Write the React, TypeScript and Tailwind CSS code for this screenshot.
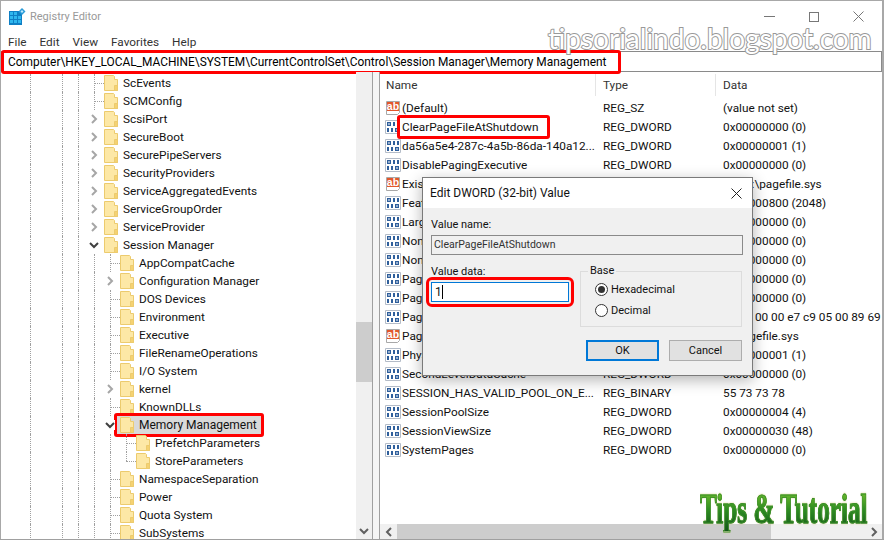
import React from 'react';

const FONT = "font-['Roboto','Noto_Sans',sans-serif]";

type TreeItem = {
  name: string;
  level?: number;
  arrow?: 'closed' | 'open';
  last?: boolean;
  selected?: boolean;
};

const treeItems: TreeItem[] = [
  { name: 'ScEvents' },
  { name: 'SCMConfig' },
  { name: 'ScsiPort', arrow: 'closed' },
  { name: 'SecureBoot', arrow: 'closed' },
  { name: 'SecurePipeServers', arrow: 'closed' },
  { name: 'SecurityProviders', arrow: 'closed' },
  { name: 'ServiceAggregatedEvents', arrow: 'closed' },
  { name: 'ServiceGroupOrder', arrow: 'closed' },
  { name: 'ServiceProvider', arrow: 'closed' },
  { name: 'Session Manager', arrow: 'open' },
  { name: 'AppCompatCache', level: 1 },
  { name: 'Configuration Manager', level: 1, arrow: 'closed' },
  { name: 'DOS Devices', level: 1 },
  { name: 'Environment', level: 1 },
  { name: 'Executive', level: 1 },
  { name: 'FileRenameOperations', level: 1 },
  { name: 'I/O System', level: 1 },
  { name: 'kernel', level: 1, arrow: 'closed' },
  { name: 'KnownDLLs', level: 1 },
  { name: 'Memory Management', level: 1, arrow: 'open', selected: true },
  { name: 'PrefetchParameters', level: 2 },
  { name: 'StoreParameters', level: 2, last: true },
  { name: 'NamespaceSeparation', level: 1 },
  { name: 'Power', level: 1 },
  { name: 'Quota System', level: 1 },
  { name: 'SubSystems', level: 1 },
];

const values: { name: string; type: string; data: string; text?: boolean; mark?: boolean }[] = [
  { name: '(Default)', type: 'REG_SZ', data: '(value not set)', text: true },
  { name: 'ClearPageFileAtShutdown', type: 'REG_DWORD', data: '0x00000000 (0)', mark: true },
  { name: 'da56a5e4-287c-4a5b-86da-140a12...', type: 'REG_DWORD', data: '0x00000001 (1)' },
  { name: 'DisablePagingExecutive', type: 'REG_DWORD', data: '0x00000000 (0)' },
  { name: 'ExistingPageFiles', type: 'REG_MULTI_SZ', data: '\\??\\C:\\pagefile.sys', text: true },
  { name: 'FeatureSettings', type: 'REG_DWORD', data: '0x00000800 (2048)' },
  { name: 'LargeSystemCache', type: 'REG_DWORD', data: '0x00000000 (0)' },
  { name: 'NonPagedPoolQuota', type: 'REG_DWORD', data: '0x00000000 (0)' },
  { name: 'NonPagedPoolSize', type: 'REG_DWORD', data: '0x00000000 (0)' },
  { name: 'PagedPoolQuota', type: 'REG_DWORD', data: '0x00000000 (0)' },
  { name: 'PagedPoolSize', type: 'REG_DWORD', data: '0x00000000 (0)' },
  { name: 'PagefileUsage', type: 'REG_BINARY', data: '2c 00 00 00 e7 c9 05 00 89 69 02 00' },
  { name: 'PagingFiles', type: 'REG_MULTI_SZ', data: '?:\\pagefile.sys', text: true },
  { name: 'PhysicalAddressExtension', type: 'REG_DWORD', data: '0x00000001 (1)' },
  { name: 'SecondLevelDataCache', type: 'REG_DWORD', data: '0x00000000 (0)' },
  { name: 'SESSION_HAS_VALID_POOL_ON_E...', type: 'REG_BINARY', data: '55 73 73 78' },
  { name: 'SessionPoolSize', type: 'REG_DWORD', data: '0x00000004 (4)' },
  { name: 'SessionViewSize', type: 'REG_DWORD', data: '0x00000030 (48)' },
  { name: 'SystemPages', type: 'REG_DWORD', data: '0x00000000 (0)' },
];

const FolderIcon = () => (
  <svg width="14" height="16" viewBox="0 0 14 16" className="shrink-0">
    <path d="M.5.5h9l1 1v3h3v11H.5z" fill="#fde8a6" stroke="#eccb6e" />
    <path d="M10.5 10.5h3v5h-3z" fill="#f5d272" stroke="#eccb6e" />
  </svg>
);

const AppIcon = () => (
  <svg width="17" height="17" viewBox="0 0 17 17">
    <path d="M0 3h13v14H0z" fill="#0f7fc4" />
    <path d="M1 4h3v3H1zM5 4h3v3H5zM1 8h3v3H1zM5 8h3v3H5zM9 8h3v3H9zM1 12h3v3H1zM5 12h3v3H5zM9 12h3v3H9z" fill="#2fb7ee" />
    <path d="M13 0l3.5 3.5L13 7 9.5 3.5z" fill="#2a9bd8" />
    <path d="M13 2l1.5 1.5L13 5l-1.5-1.5z" fill="#bfe8fb" />
  </svg>
);

const StringIcon = () => (
  <svg width="16" height="16" viewBox="0 0 16 16" className="shrink-0">
    <path d="M1.5 1.5h13v11l-2 2h-11z" fill="#fff" stroke="#a8a8a8" />
    <path d="M2 2h12v9H2z" fill="#e2572b" />
    <text x="8" y="9.5" textAnchor="middle" fontSize="10.5" fontWeight="700" fill="#fff" fontFamily="Liberation Sans, sans-serif">
      ab
    </text>
  </svg>
);

// "011" over "110" in blue on a small sheet
const BinaryIcon = () => (
  <svg width="16" height="16" viewBox="0 0 16 16" className="shrink-0">
    <path d="M.5 1.5h15v13H.5z" fill="#fff" stroke="#b4bcc8" />
    <path
      fillRule="evenodd"
      d="M2 3h4v4H2zM3.5 4v2h1V4zM8 3h2v4H8zM12 3h2v4h-2zM2 9h2v4H2zM6 9h2v4H6zM10 9h4v4h-4zM11.5 10v2h1v-2z"
      fill="#2f5f9c"
    />
  </svg>
);

const Chevron = ({ dir, className }: { dir: 'left' | 'right' | 'down'; className?: string }) => {
  const d = dir === 'left' ? 'M7 1L3 5l4 4' : dir === 'right' ? 'M3 1l4 4-4 4' : 'M1 3l4 4 4-4';
  return (
    <svg width="10" height="10" viewBox="0 0 10 10" className={className}>
      <path d={d} fill="none" stroke="currentColor" strokeWidth="2" />
    </svg>
  );
};

const TreeRow = ({ item }: { item: TreeItem }) => {
  const level = item.level ?? 0;
  const guide = 'h-full shrink-0 border-l border-dotted border-[#a0a0a0]';
  return (
    <div className="flex h-[18px] items-center">
      <div className="w-[29px] shrink-0" />
      <div className={`w-[32px] ${guide}`} />
      <div className={`w-[16px] ${guide}`} />
      <div className={`w-[16px] ${guide}`} />
      {level > 0 && <div className={`w-[16px] ${guide}`} />}
      {level > 1 && <div className={`w-[16px] ${guide}`} />}
      {/* connector cell in front of the folder */}
      <div className="relative flex h-full w-[10px] shrink-0 items-center">
        {!item.arrow && (
          <>
            <div className={`absolute top-0 left-0 border-l border-dotted border-[#a0a0a0] ${item.last ? 'h-[9px]' : 'h-full'}`} />
            <div className="w-full border-t border-dotted border-[#a0a0a0]" />
          </>
        )}
        {item.arrow === 'closed' && (
          <div className="absolute top-[4px] -left-[5px] bg-white text-[#a6a6a6]">
            <Chevron dir="right" className="block" />
          </div>
        )}
        {item.arrow === 'open' && (
          <div className="absolute top-[4px] -left-[5px] bg-white text-[#404040]">
            <Chevron dir="down" className="block" />
          </div>
        )}
      </div>
      {item.selected ? (
        <div className="ml-[-6px] flex h-[24px] w-[150px] shrink-0 items-center gap-[5px] rounded-[3px] bg-[#d9d9d9] pl-[6px] text-[12px] whitespace-nowrap outline-[3px] -outline-offset-[3px] outline-[#f00]">
          <FolderIcon />
          <span className="text-[#111]">{item.name}</span>
        </div>
      ) : (
        <div className="flex items-center gap-[5px]">
          <FolderIcon />
          <span className="whitespace-nowrap text-[#111]">{item.name}</span>
        </div>
      )}
    </div>
  );
};

const ValueRow = ({ row }: { row: (typeof values)[number] }) => (
  <div className="flex h-[19px] items-center whitespace-nowrap text-[#111]">
    <div className="flex w-[216px] shrink-0 items-center gap-[1px] pl-[5px]">
      {row.text ? <StringIcon /> : <BinaryIcon />}
      {row.mark ? (
        <span className="-ml-[5px] flex h-[24px] w-[153px] items-center rounded-[3px] bg-white pl-[5px] outline-[3px] -outline-offset-[3px] outline-[#f00]">
          {row.name}
        </span>
      ) : (
        <span>{row.name}</span>
      )}
    </div>
    <div className="w-[120px] shrink-0 pl-[7px]">{row.type}</div>
    <div className="pl-[7px]">{row.data}</div>
  </div>
);

const Radio = ({ label, checked }: { label: string; checked?: boolean }) => (
  <div className="flex h-[21px] items-center gap-[3px]">
    <div className="flex h-[13px] w-[13px] items-center justify-center rounded-full border border-[#333] bg-white">
      {checked && <div className="h-[7px] w-[7px] rounded-full bg-[#333]" />}
    </div>
    <span>{label}</span>
  </div>
);

const EditDialog = () => (
  <div className="absolute top-[177px] left-[422px] flex h-[199px] w-[331px] flex-col border border-[#7a7a7a] bg-[#f0f0f0] text-[11px] text-[#111] shadow-[0_4px_14px_rgba(0,0,0,0.3)]">
    <div className="flex h-[30px] shrink-0 items-center justify-between bg-white pr-[10px] pl-[7px] text-[12px]">
      <span>Edit DWORD (32-bit) Value</span>
      <svg width="11" height="11" viewBox="0 0 11 11">
        <path d="M.5.5l10 10M10.5.5l-10 10" stroke="#222" strokeWidth="1" fill="none" />
      </svg>
    </div>
    <div className="flex flex-1 flex-col px-[8px] pt-[8px]">
      <div className="h-[18px] leading-[18px]">Value name:</div>
      <div className="mt-[1px] flex h-[20px] w-[312px] items-center border border-[#8a8a8a] bg-[#f0f0f0] pl-[2px] text-[10.5px] text-[#333]">
        ClearPageFileAtShutdown
      </div>
      <div className="mt-[8px] flex gap-[11px]">
        <div className="w-[138px] shrink-0">
          <div className="h-[18px] leading-[18px]">Value data:</div>
          <div className="mt-[1px] rounded-[1px] outline-[3px] outline-offset-[2px] outline-[#f00]">
            <div className="flex h-[20px] items-center border border-[#0078d7] bg-white pl-[3px] text-[12px]">
              <span>1</span>
              <div className="h-[14px] w-px bg-black" />
            </div>
          </div>
        </div>
        <div className="relative mt-[8px] flex h-[56px] w-[162px] flex-col border border-[#dcdcdc] pt-[7px] pl-[14px]">
          <span className="absolute -top-[9px] left-[7px] bg-[#f0f0f0] px-[2px]">Base</span>
          <Radio label="Hexadecimal" checked />
          <Radio label="Decimal" />
        </div>
      </div>
      <div className="mt-[13px] flex justify-end gap-[10px] pr-[2px]">
        <div className="flex h-[21px] w-[73px] items-center justify-center border-2 border-[#0078d7] bg-[#e1e1e1]">OK</div>
        <div className="flex h-[21px] w-[73px] items-center justify-center border border-[#adadad] bg-[#e1e1e1]">Cancel</div>
      </div>
    </div>
  </div>
);

export default function App() {
  return (
    <div className={`relative h-[541px] w-[884px] overflow-hidden bg-white text-[11.8px] leading-[16px] ${FONT}`}>
      <div className="flex h-[539px] flex-col border-t border-r-2 border-l border-[#a8a8a8]">
        {/* Title bar */}
        <div className="flex h-[31px] shrink-0 items-center pr-[18px] pl-[8px]">
          <AppIcon />
          <span className="ml-[4px] text-[11px] text-[#999]">Registry Editor</span>
          <div className="ml-auto flex items-center gap-[34px]">
            <div className="h-px w-[11px] bg-[#777]" />
            <div className="h-[10px] w-[10px] border border-[#777]" />
            <svg width="11" height="11" viewBox="0 0 11 11">
              <path d="M.5.5l10 10M10.5.5l-10 10" stroke="#777" fill="none" />
            </svg>
          </div>
        </div>

        {/* Menu */}
        <div className="flex h-[19px] shrink-0 items-center gap-[13px] pl-[7px] text-[#333]">
          <span>File</span>
          <span>Edit</span>
          <span>View</span>
          <span>Favorites</span>
          <span>Help</span>
        </div>

        {/* Address bar */}
        <div className="flex h-[21px] shrink-0 items-center border border-[#8a8a8a]">
          <div className="-ml-[1px] flex h-[24px] w-[620px] items-center rounded-[3px] pl-[7px] text-[11.9px] whitespace-nowrap text-black outline-[3px] -outline-offset-[3px] outline-[#f00]">
            Computer\HKEY_LOCAL_MACHINE\SYSTEM\CurrentControlSet\Control\Session Manager\Memory Management
          </div>
        </div>

        <div className="flex min-h-0 flex-1">
          {/* Tree panel */}
          <div className="flex w-[372px] shrink-0 border-r border-[#a0a0a0]">
            <div className="min-w-0 flex-1 overflow-hidden pt-[2px]">
              {treeItems.map((item) => (
                <TreeRow key={item.name} item={item} />
              ))}
            </div>
            <div className="flex w-[16px] shrink-0 flex-col bg-[#f0f0f0] text-[#606060]">
              <div className="flex-1" />
              <div className="h-[60px] bg-[#cdcdcd]" />
              <div className="h-[141px]" />
              <div className="flex h-[16px] items-center justify-center">
                <Chevron dir="down" />
              </div>
            </div>
          </div>

          <div className="w-[6px] shrink-0 bg-[#f5f5f5]" />

          {/* Values panel */}
          <div className="relative flex min-w-0 flex-1 flex-col overflow-hidden border-l border-[#a0a0a0]">
            <div className="flex h-[26px] shrink-0 items-center text-[#333]">
              <div className="w-[216px] shrink-0 border-r border-[#e5e5e5] pl-[6px] leading-[22px]">Name</div>
              <div className="w-[120px] shrink-0 border-r border-[#e5e5e5] pl-[7px] leading-[22px]">Type</div>
              <div className="pl-[7px]">Data</div>
            </div>
            <div className="flex-1 overflow-hidden">
              {values.map((row) => (
                <ValueRow key={row.name} row={row} />
              ))}
            </div>
            <div className="flex h-[15px] shrink-0 bg-[#f0f0f0] text-[#606060]">
              <div className="flex w-[17px] items-center justify-center">
                <Chevron dir="left" />
              </div>
              <div className="w-[374px] bg-[#cdcdcd]" />
              <div className="flex-1" />
              <div className="flex w-[17px] items-center justify-center">
                <Chevron dir="right" />
              </div>
            </div>
          </div>
        </div>
      </div>
      <div className="h-[1px] bg-[#a0a0a0]" />

      <EditDialog />

      {/* Blog watermark */}
      <div className="absolute top-[19px] left-[548px] font-['Lato',sans-serif] text-[28px] leading-[38px] whitespace-nowrap text-white [-webkit-text-stroke:2px_#999] [paint-order:stroke_fill]">
        tipsorialindo.blogspot.com
      </div>

      {/* Logo */}
      <div className="absolute top-[487px] left-[700px] origin-left scale-x-[0.6] bg-gradient-to-b from-[#7fcb2d] via-[#2f8f22] to-[#14551a] bg-clip-text font-['Liberation_Serif',serif] text-[42px] leading-[44px] font-bold whitespace-nowrap text-transparent drop-shadow-[0_0_1px_#e0d8a0] [-webkit-text-stroke:1px_#3b8f2a]">
        Tips &amp; Tutorial
      </div>
    </div>
  );
}
